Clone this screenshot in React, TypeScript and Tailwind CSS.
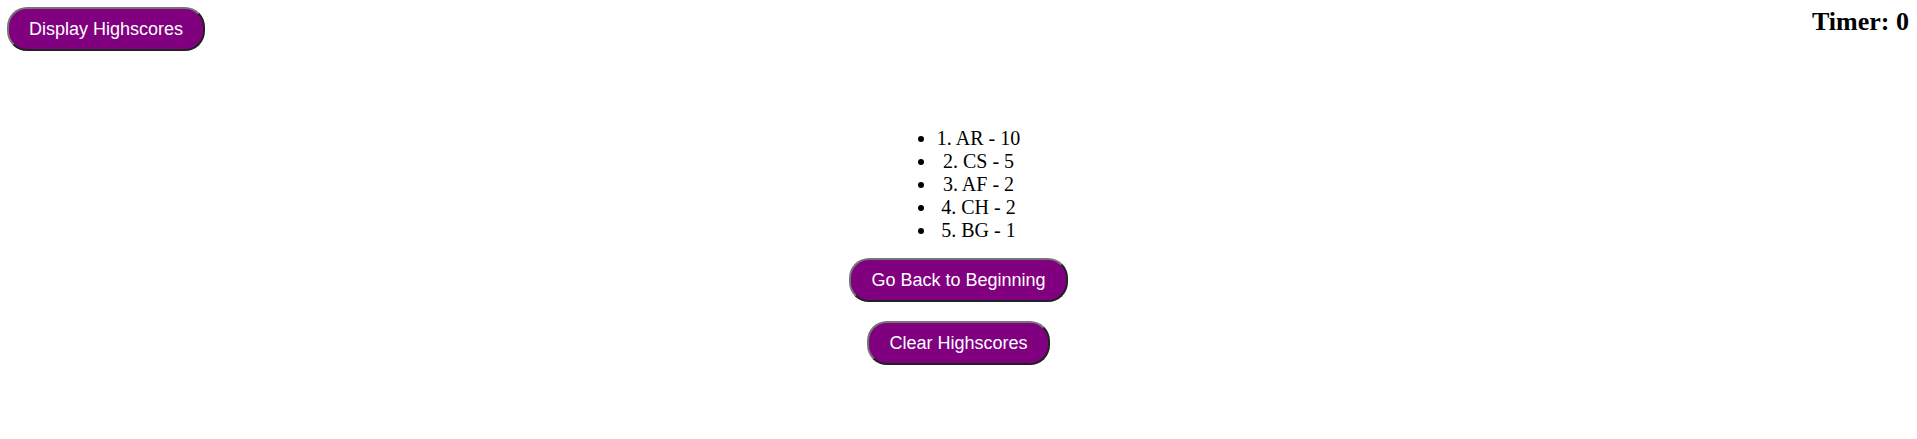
import React from "react";

const scores = [
  { initials: "AR", score: 10 },
  { initials: "CS", score: 5 },
  { initials: "AF", score: 2 },
  { initials: "CH", score: 2 },
  { initials: "BG", score: 1 },
];

function PurpleButton({ children }: { children: React.ReactNode }) {
  return (
    <button className="rounded-[20px] border-2 border-[#767676] [border-style:outset] bg-[#800080] px-5 py-[10px] font-['Liberation_Sans',Arial,sans-serif] text-[18px] leading-[20px] text-white">
      {children}
    </button>
  );
}

export default function App() {
  return (
    <div className="min-h-[439px] bg-white font-['Liberation_Serif','Times_New_Roman',serif] text-black">
      <div className="flex items-start justify-between pl-[7px] pr-[8px] pt-[7px]">
        <PurpleButton>Display Highscores</PurpleButton>
        <h2 className="text-[26px] font-bold leading-[30px]">Timer: 0</h2>
      </div>

      <div className="mt-[76px] flex flex-col items-center">
        <ul className="list-disc pl-10 text-center text-[20px] leading-[23px]">
          {scores.map((s, i) => (
            <li key={s.initials}>
              {i + 1}. {s.initials} - {s.score}
            </li>
          ))}
        </ul>
        <div className="mt-4 flex flex-col items-center gap-[19px]">
          <PurpleButton>Go Back to Beginning</PurpleButton>
          <PurpleButton>Clear Highscores</PurpleButton>
        </div>
      </div>
    </div>
  );
}
